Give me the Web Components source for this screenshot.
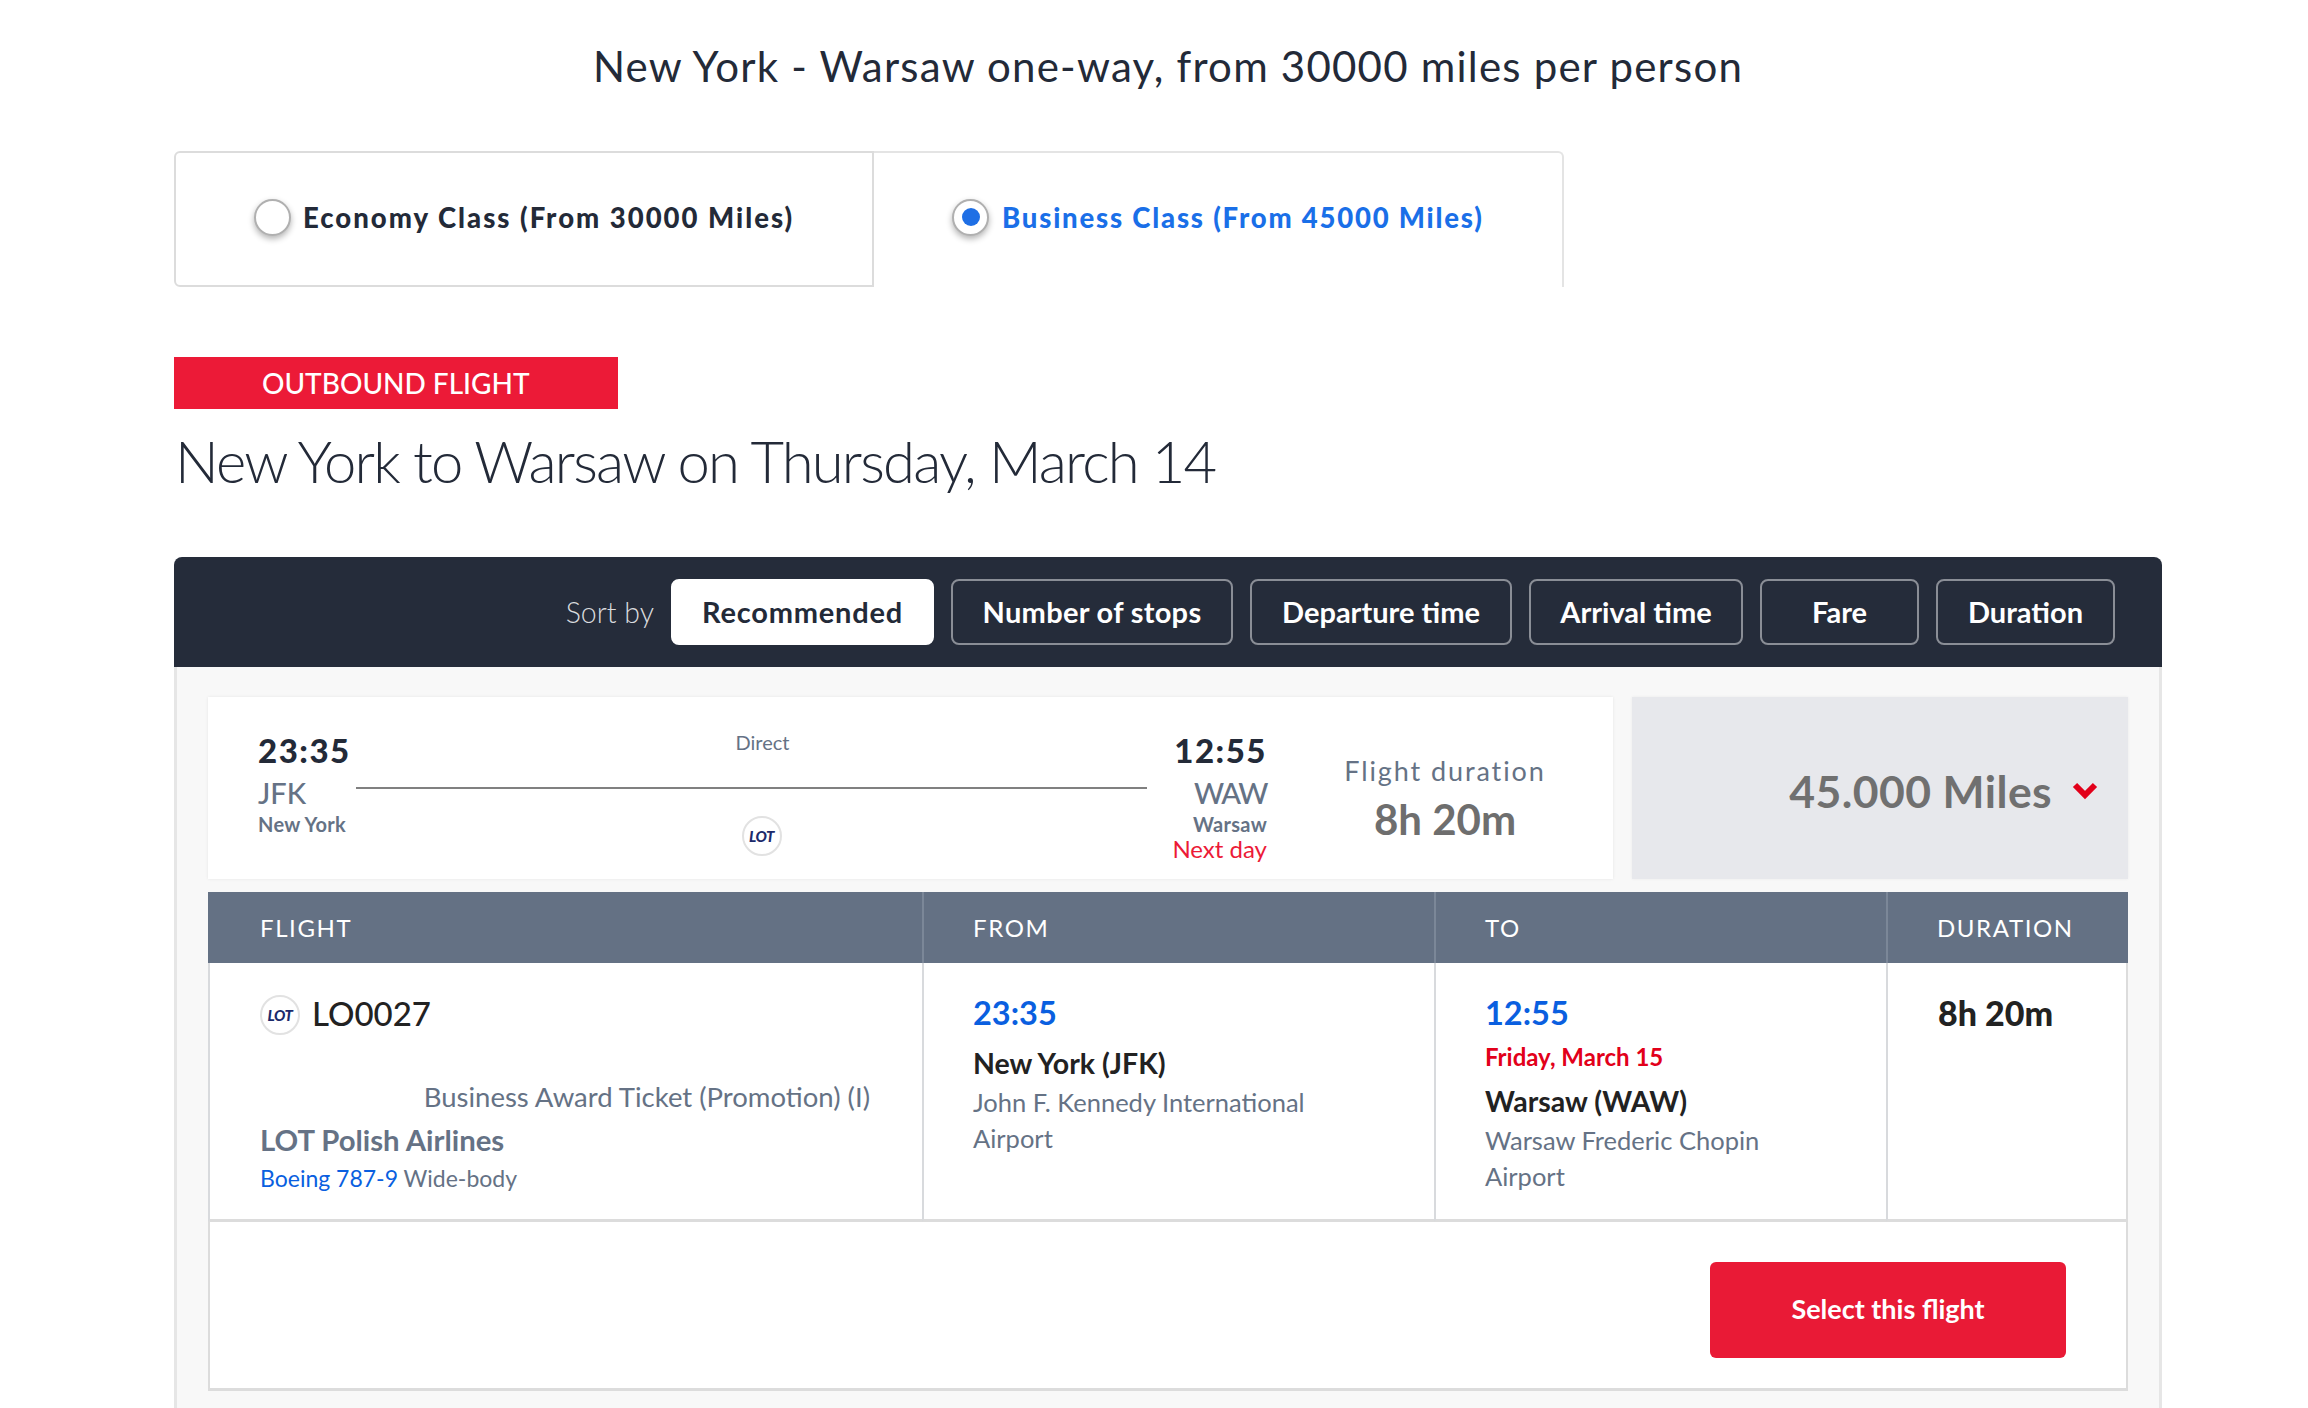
<!DOCTYPE html>
<html>
<head>
<meta charset="utf-8">
<style>
  html, body { margin: 0; height: 1408px; overflow: hidden; background: #fff; }
  body { font-family: Lato, "Noto Sans", sans-serif; color: #232a38; }
  award-page { margin-left: 174px; }
</style>
</head>
<body>
<award-page>
  <span slot="title">New York - Warsaw one-way, from 30000 miles per person</span>
  <fare-tabs slot="tabs">
    <fare-tab>Economy Class (From 30000 Miles)</fare-tab>
    <fare-tab checked>Business Class (From 45000 Miles)</fare-tab>
  </fare-tabs>
  <span slot="badge">OUTBOUND FLIGHT</span>
  <span slot="heading">New York to Warsaw on Thursday, March 14</span>
  <sort-bar slot="sort">
    <sort-button active style="width:263px;letter-spacing:.8px">Recommended</sort-button>
    <sort-button style="width:282px;letter-spacing:.3px">Number of stops</sort-button>
    <sort-button style="width:262px">Departure time</sort-button>
    <sort-button style="width:214px">Arrival time</sort-button>
    <sort-button style="width:159px">Fare</sort-button>
    <sort-button style="width:179px">Duration</sort-button>
  </sort-bar>
  <flight-panel slot="panel">
    <flight-summary slot="summary"></flight-summary>
    <fare-price slot="summary">45.000 Miles</fare-price>
    <flight-table slot="table">
      <flight-info slot="flight"></flight-info>
      <flight-leg slot="from" nodate>
        <span slot="time">23:35</span>
        <span slot="city">New York (JFK)</span>
        <span slot="airport">John F. Kennedy International Airport</span>
      </flight-leg>
      <flight-leg slot="to">
        <span slot="time">12:55</span>
        <span slot="date">Friday, March 15</span>
        <span slot="city">Warsaw (WAW)</span>
        <span slot="airport">Warsaw Frederic Chopin Airport</span>
      </flight-leg>
      <span slot="duration">8h 20m</span>
      <span slot="action">Select this flight</span>
    </flight-table>
  </flight-panel>
</award-page>

<script>
// small helper so every element gets an open shadow root from its html string
function component(name, html) {
  const template = document.createElement('template');
  template.innerHTML = html;
  customElements.define(name, class extends HTMLElement {
    constructor() {
      super();
      this.attachShadow({mode: 'open'});
      this.shadowRoot.appendChild(template.content.cloneNode(true));
    }
  });
}

component('award-page', `
  <style>
    :host { display: block; width: 1988px; }
    .title { height: 132px; line-height: 132px; text-align: center; font-size: 42px; letter-spacing: 1.22px; color: #232a38; margin-bottom: 19px; }
    .tabs { height: 136px; margin-bottom: 70px; }
    .badge { width: 444px; height: 52px; line-height: 52px; box-sizing: border-box; padding-left: 88px; background: #ec1a37; color: #fff; font-size: 28px; font-weight: 500; }
    .heading { height: 103px; line-height: 103px; padding-left: 1px; font-size: 58px; font-weight: 300; color: #232a38; margin-bottom: 45px; letter-spacing: -1.8px; }
  </style>
  <div class="title"><slot name="title"></slot></div>
  <div class="tabs"><slot name="tabs"></slot></div>
  <div class="badge"><slot name="badge"></slot></div>
  <div class="heading"><slot name="heading"></slot></div>
  <slot name="sort"></slot>
  <slot name="panel"></slot>
`);

component('fare-tabs', `
  <style>
    :host { display: flex; width: 1390px; height: 136px; }
    ::slotted(fare-tab:first-child) { border: 2px solid #dcdcdc; border-radius: 6px 0 0 6px; width: 700px; }
    ::slotted(fare-tab:last-child) { border-top: 2px solid #e4e4e4; border-right: 2px solid #e4e4e4; border-radius: 0 6px 0 0; flex: 1; }
  </style>
  <slot></slot>
`);

component('fare-tab', `
  <style>
    :host { display: flex; align-items: center; box-sizing: border-box; padding: 0 0 4px 78px; gap: 12px; font-size: 27.5px; font-weight: 900; letter-spacing: 2px; color: #232a38; }
    :host([checked]) { color: #1a6fe8; padding: 0 0 6px 78px; gap: 13px; letter-spacing: 1.8px; }
    .radio { width: 37px; height: 37px; box-sizing: border-box; border: 2px solid #b0b0b0; border-radius: 50%; background: #fff; box-shadow: 0 3px 6px rgba(0,0,0,.3); display: flex; align-items: center; justify-content: center; }
    .dot { display: none; width: 18px; height: 18px; border-radius: 50%; background: #1f6fe5; }
    :host([checked]) .dot { display: block; }
  </style>
  <span class="radio"><span class="dot"></span></span>
  <span><slot></slot></span>
`);

component('sort-bar', `
  <style>
    :host { display: flex; align-items: center; justify-content: flex-end; gap: 17px; height: 110px; box-sizing: border-box; padding-right: 47px; background: #252c3a; border-radius: 8px 8px 0 0; }
    span { color: #d9dbde; font-size: 28.5px; font-weight: 300; }
  </style>
  <span>Sort by</span>
  <slot></slot>
`);

component('sort-button', `
  <style>
    :host { display: block; box-sizing: border-box; height: 66px; line-height: 62px; text-align: center; border: 2px solid #8a8e96; border-radius: 8px; color: #fff; font-size: 29px; font-weight: 700; }
    :host([active]) { background: #fff; border-color: #fff; color: #232a38; }
  </style>
  <slot></slot>
`);

component('flight-panel', `
  <style>
    :host { display: block; box-sizing: border-box; height: 760px; padding: 30px 31px 0 31px; background: #f8f8f8; border: solid #e6e6e6; border-width: 0 3px; }
    .top { display: flex; gap: 19px; height: 182px; margin-bottom: 13px; }
  </style>
  <div class="top"><slot name="summary"></slot></div>
  <slot name="table"></slot>
`);

component('lot-logo', `
  <style>
    :host { display: flex; align-items: center; justify-content: center; width: 40px; height: 40px; box-sizing: border-box; border: 2px solid #e2e2e2; border-radius: 50%; background: #fff; flex: none; }
    span { font-size: 15px; line-height: 14px; font-weight: 900; font-style: italic; color: #1c2a6b; letter-spacing: -0.4px; }
  </style>
  <span>LOT</span>
`);

component('flight-summary', `
  <style>
    :host { display: flex; width: 1405px; height: 182px; box-sizing: border-box; padding-left: 50px; background: #fff; box-shadow: 0 0 3px rgba(0,0,0,.08); }
    .end { width: 98px; padding-top: 37px; flex: none; }
    .end.arr { width: 120px; text-align: right; }
    .time { font-size: 33px; line-height: 32px; font-weight: 900; color: #232a38; letter-spacing: 1.5px; }
    .code { font-size: 29px; line-height: 34px; margin-top: 10px; font-weight: 500; color: #657285; }
    .arr .code { letter-spacing: -1.5px; }
    .place { font-size: 20px; line-height: 28px; font-weight: 700; color: #657285; letter-spacing: .3px; }
    .next { font-size: 24px; line-height: 20px; margin-top: 1px; color: #ec1a37; font-weight: 400; }
    .route { flex: none; width: 791px; display: flex; flex-direction: column; align-items: center; padding-top: 33px; box-sizing: border-box; }
    .direct { font-size: 20px; line-height: 24px; color: #657285; margin-left: 22px; }
    .line { align-self: stretch; height: 2px; background: #808080; margin-top: 33px; }
    lot-logo { margin-top: 27px; margin-left: 20px; }
    .dur { flex: 1; text-align: center; padding-top: 55px; padding-left: 10px; }
    .dur-label { font-size: 27px; line-height: 38px; letter-spacing: 1.9px; color: #657285; }
    .dur-value { font-size: 42px; line-height: 54px; margin-top: 2px; font-weight: 700; color: #6e6e6e; }
  </style>
  <div class="end">
    <div class="time">23:35</div>
    <div class="code">JFK</div>
    <div class="place">New York</div>
  </div>
  <div class="route">
    <div class="direct">Direct</div>
    <div class="line"></div>
    <lot-logo></lot-logo>
  </div>
  <div class="end arr">
    <div class="time">12:55</div>
    <div class="code">WAW</div>
    <div class="place">Warsaw</div>
    <div class="next">Next day</div>
  </div>
  <div class="dur">
    <div class="dur-label">Flight duration</div>
    <div class="dur-value">8h 20m</div>
  </div>
`);

component('fare-price', `
  <style>
    :host { display: flex; align-items: center; justify-content: flex-end; flex: 1; gap: 20px; padding: 5px 30px 0 0; background: #e7e8ec; color: #707070; font-size: 44.5px; font-weight: 700; letter-spacing: .4px; box-shadow: 0 0 3px rgba(0,0,0,.06); }
    svg { display: block; }
  </style>
  <slot></slot>
  <svg width="26" height="18" viewBox="0 0 26 18"><path d="M3 3l10 10L23 3" fill="none" stroke="#e2001a" stroke-width="6"/></svg>
`);

component('flight-table', `
  <style>
    :host { display: block; width: 1920px; }
    .grid { display: grid; grid-template-columns: 714px 512px 452px 242px; }
    .head { background: #647184; color: #fff; height: 71px; line-height: 71px; box-sizing: border-box; padding-left: 49px; font-size: 24px; letter-spacing: 1.6px; border-left: 2px solid #7b8798; }
    .head:first-child { border-left: 0; padding-left: 52px; }
    .cell { height: 259px; box-sizing: border-box; padding: 30px 0 0 49px; background: #fff; border-left: 2px solid #d8dadd; border-bottom: 3px solid #dcdcdc; }
    .cell.first { padding-left: 50px; }
    .cell.last { padding-left: 50px; border-right: 2px solid #dcdcdc; }
    .dur { font-size: 34px; line-height: 40px; font-weight: 900; color: #222; }
    .foot { height: 169px; box-sizing: border-box; display: flex; justify-content: flex-end; align-items: flex-start; padding: 40px 60px 0 0; background: #fff; border: solid #dcdcdc; border-width: 0 2px 3px 2px; }
    .btn { width: 356px; height: 96px; line-height: 94px; text-align: center; border-radius: 6px; background: #e91a36; color: #fff; font-size: 27px; font-weight: 700; }
  </style>
  <div class="grid">
    <div class="head">FLIGHT</div>
    <div class="head">FROM</div>
    <div class="head">TO</div>
    <div class="head">DURATION</div>
    <div class="cell first"><slot name="flight"></slot></div>
    <div class="cell"><slot name="from"></slot></div>
    <div class="cell"><slot name="to"></slot></div>
    <div class="cell last"><div class="dur"><slot name="duration"></slot></div></div>
  </div>
  <div class="foot"><div class="btn"><slot name="action"></slot></div></div>
`);

component('flight-info', `
  <style>
    :host { display: block; padding-right: 52px; }
    .top { display: flex; align-items: center; gap: 12px; height: 40px; font-size: 33px; color: #222; font-weight: 500; }
    lot-logo { margin-top: 4px; }
    .fare { margin-top: 46px; font-size: 27.5px; line-height: 36px; text-align: right; color: #657285; }
    .airline { margin-top: 5px; font-size: 29.3px; line-height: 40px; font-weight: 700; color: #657285; }
    .craft { margin-top: 3px; font-size: 23px; line-height: 30px; color: #657285; }
    .craft b { font-weight: 400; color: #0a5fe0; }
  </style>
  <div class="top"><lot-logo></lot-logo><span>LO0027</span></div>
  <div class="fare">Business Award Ticket (Promotion) (I)</div>
  <div class="airline">LOT Polish Airlines</div>
  <div class="craft"><b>Boeing 787-9</b> Wide-body</div>
`);

component('flight-leg', `
  <style>
    :host { display: block; max-width: 345px; }
    .time { font-size: 32.5px; line-height: 40px; font-weight: 700; color: #0a5fe0; }
    .date { font-size: 24px; line-height: 44px; margin-top: 2px; font-weight: 700; color: #e2001a; }
    .city { font-size: 28.5px; line-height: 44px; font-weight: 700; color: #222; }
    :host([nodate]) .city { margin-top: 8px; }
    .airport { font-size: 25.5px; line-height: 36px; margin-top: -1px; color: #657285; }
  </style>
  <div class="time"><slot name="time"></slot></div>
  <div class="date"><slot name="date"></slot></div>
  <div class="city"><slot name="city"></slot></div>
  <div class="airport"><slot name="airport"></slot></div>
`);
</script>
</body>
</html>
